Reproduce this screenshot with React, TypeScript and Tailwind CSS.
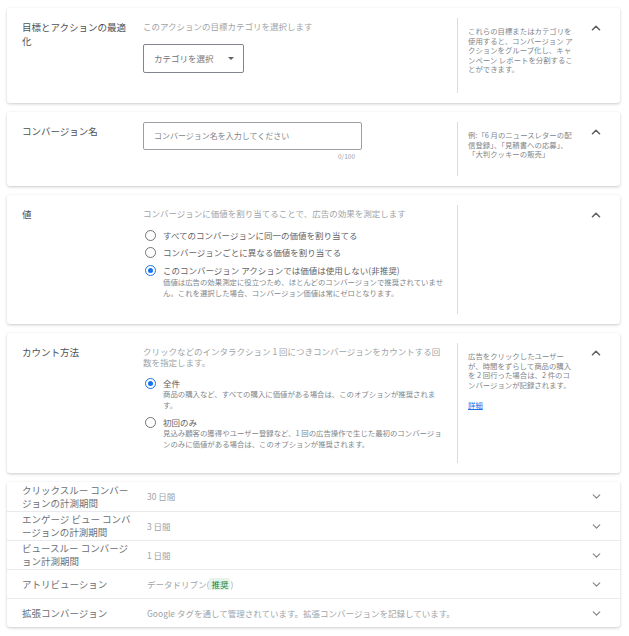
import { ChevronUp, ChevronDown } from "lucide-react";

const font = { fontFamily: '"Noto Sans CJK JP", Roboto, "Noto Sans", sans-serif' };

function Radio({ checked }: { checked?: boolean }) {
	return (
		<span
			className={`flex items-center justify-center w-[11px] h-[11px] rounded-full border-[1.5px] shrink-0 ${
				checked ? "border-[#1a73e8]" : "border-[#70757a]"
			}`}>
			{checked && <span className="w-[5px] h-[5px] rounded-full bg-[#1a73e8]" />}
		</span>
	);
}

function Card({ label, height, help, children }: { label: string; height: string; help?: React.ReactNode; children: React.ReactNode }) {
	return (
		<div className={`flex bg-white rounded-[3px] shadow-[0_1px_3px_rgba(60,64,67,0.28)] pl-[15px] pr-[17px] py-[10px] ${height}`}>
			<div className="w-[121px] shrink-0 pr-[14px] text-[9.5px] leading-[14px] text-[#4d5156] pt-[2px]">{label}</div>
			<div className="w-[304px] shrink-0">{children}</div>
			<div className="ml-[10px] border-l border-[#dadce0] pl-[10px] w-[118px] shrink-0 text-[7.4px] leading-[9.6px] text-[#80868b] pt-[8px]">{help}</div>
			<div className="ml-auto pt-[3px]">
				<ChevronUp size={14} strokeWidth={2.8} className="text-[#5f6368]" />
			</div>
		</div>
	);
}

const rows = [
	{ label: "クリックスルー コンバージョンの計測期間", value: "30 日間" },
	{ label: "エンゲージ ビュー コンバージョンの計測期間", value: "3 日間" },
	{ label: "ビュースルー コンバージョン計測期間", value: "1 日間" },
	{ label: "アトリビューション", value: "attr" },
	{ label: "拡張コンバージョン", value: "Google タグを通して管理されています。拡張コンバージョンを記録しています。" },
];

export default function App() {
	return (
		<div className="min-h-[636px] bg-white px-[7px] pt-[8px] flex flex-col gap-[9px] w-[627px]" style={font}>
			<Card
				label="目標とアクションの最適化"
				height="h-[95px]"
				help="これらの目標またはカテゴリを使用すると、コンバージョン アクションをグループ化し、キャンペーン レポートを分割することができます。">
				<div className="text-[8.5px] leading-[12px] text-[#a0a4a8] pt-[2px]">このアクションの目標カテゴリを選択します</div>
				<div className="mt-[12px] w-[101px] h-[29px] border border-[#80868b] rounded-[2px] flex items-center pl-[10px] pr-[9px] text-[8.5px] text-[#70757a]">
					<span>カテゴリを選択</span>
					<span className="ml-auto w-0 h-0 border-l-[3px] border-r-[3px] border-t-[3px] border-l-transparent border-r-transparent border-t-[#5f6368]" />
				</div>
			</Card>

			<Card label="コンバージョン名" height="h-[74px]" help="例:「6 月のニュースレターの配信登録」、「見積書への応募」、「大判クッキーの販売」">
				<div className="w-[219px] h-[28px] border border-[#9aa0a6] rounded-[2px] flex items-center pl-[10px] text-[8px] text-[#80868b]">
					コンバージョン名を入力してください
				</div>
				<div className="w-[212px] text-right text-[6.5px] leading-[9px] text-[#9aa0a6] mt-[2px]">0/100</div>
			</Card>

			<Card label="値" height="h-[129px]">
				<div className="text-[8.5px] leading-[12px] text-[#a0a4a8] pt-[2px]">コンバージョンに価値を割り当てることで、広告の効果を測定します</div>
				<div className="flex flex-col gap-[5px] mt-[10px] pl-[2px]">
					<div className="flex items-center gap-[7px] text-[8.5px] leading-[12px] text-[#5f6368]">
						<Radio />
						すべてのコンバージョンに同一の価値を割り当てる
					</div>
					<div className="flex items-center gap-[7px] text-[8.5px] leading-[12px] text-[#5f6368]">
						<Radio />
						コンバージョンごとに異なる価値を割り当てる
					</div>
					<div className="flex gap-[7px] mt-[1px]">
						<div className="pt-[1px]">
							<Radio checked />
						</div>
						<div>
							<div className="text-[8.5px] leading-[12px] text-[#5f6368]">このコンバージョン アクションでは価値は使用しない(非推奨)</div>
							<div className="text-[7.4px] leading-[10.5px] text-[#80868b] mt-[1px]">
								価値は広告の効果測定に役立つため、ほとんどのコンバージョンで推奨されていません。これを選択した場合、コンバージョン価値は常にゼロとなります。
							</div>
						</div>
					</div>
				</div>
			</Card>

			<Card
				label="カウント方法"
				height="h-[140px]"
				help={
					<>
						<div>広告をクリックしたユーザーが、時間をずらして商品の購入を 2 回行った場合は、2 件のコンバージョンが記録されます。</div>
						<div className="mt-[11px] text-[#1a73e8] underline">詳細</div>
					</>
				}>
				<div className="text-[8.5px] leading-[11px] text-[#a0a4a8] pt-[3px] pr-[4px]">
					クリックなどのインタラクション 1 回につきコンバージョンをカウントする回数を指定します。
				</div>
				<div className="flex flex-col gap-[6px] mt-[9px] pl-[2px]">
					<div className="flex gap-[7px]">
						<div className="pt-[1px]">
							<Radio checked />
						</div>
						<div>
							<div className="text-[8.5px] leading-[12px] text-[#5f6368]">全件</div>
							<div className="text-[7.4px] leading-[10.5px] text-[#80868b]">
								商品の購入など、すべての購入に価値がある場合は、このオプションが推奨されます。
							</div>
						</div>
					</div>
					<div className="flex gap-[7px]">
						<div className="pt-[1px]">
							<Radio />
						</div>
						<div>
							<div className="text-[8.5px] leading-[12px] text-[#5f6368]">初回のみ</div>
							<div className="text-[7.4px] leading-[10.5px] text-[#80868b]">
								見込み顧客の獲得やユーザー登録など、1 回の広告操作で生じた最初のコンバージョンのみに価値がある場合は、このオプションが推奨されます。
							</div>
						</div>
					</div>
				</div>
			</Card>

			<div className="bg-white rounded-[3px] shadow-[0_1px_3px_rgba(60,64,67,0.28)] flex flex-col">
				{rows.map((row, index) => (
					<div
						key={index}
						className={`flex items-center h-[29px] pl-[15px] pr-[17px] ${index > 0 ? "border-t border-[#e8eaed]" : ""}`}>
						<div className="w-[125px] shrink-0 pr-[14px] text-[9.5px] leading-[13px] text-[#6b6f74]">{row.label}</div>
						<div className="text-[8.5px] text-[#a0a4a8]">
							{row.value === "attr" ? (
								<span>
									データドリブン(<span className="bg-[#e6f4ea] text-[#188038] px-[2px] rounded-[2px]">推奨</span>)
								</span>
							) : (
								row.value
							)}
						</div>
						<div className="ml-auto">
							<ChevronDown size={13} strokeWidth={2.2} className="text-[#80868b]" />
						</div>
					</div>
				))}
			</div>
		</div>
	);
}
